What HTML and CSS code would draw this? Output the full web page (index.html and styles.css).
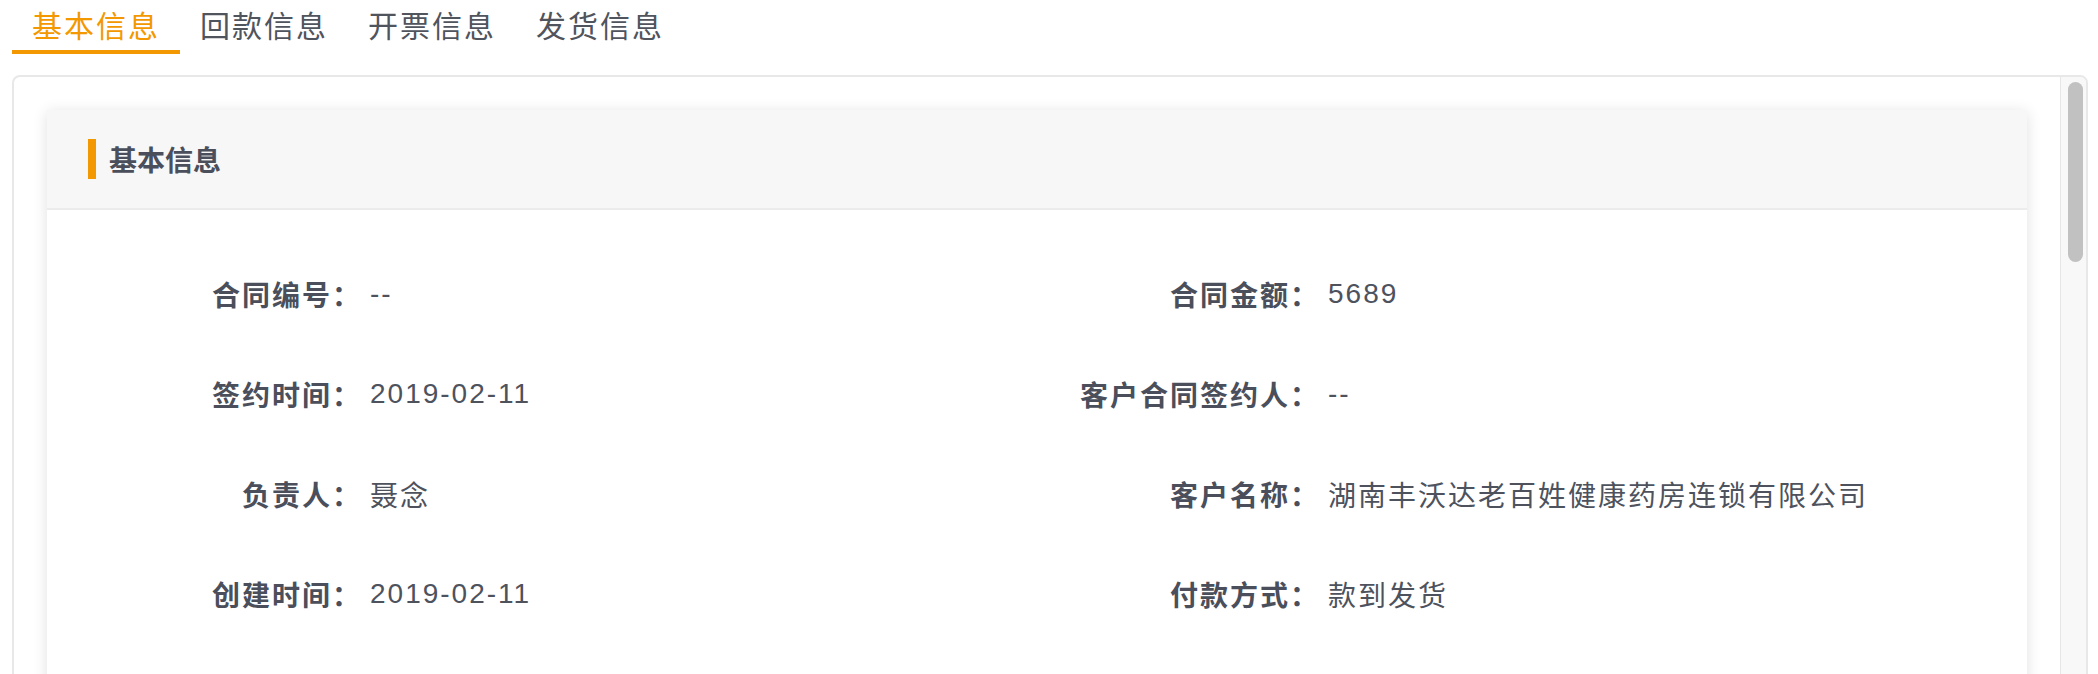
FILE: index.html
```html
<!DOCTYPE html>
<html lang="zh-CN">
<head>
<meta charset="utf-8">
<title>合同详情</title>
<link rel="stylesheet" href="styles.css">
</head>
<body>
<nav class="tabs">
  <div class="tab active">基本信息</div>
  <div class="tab">回款信息</div>
  <div class="tab">开票信息</div>
  <div class="tab">发货信息</div>
</nav>
<section class="panel">
  <div class="panel-main">
    <div class="card">
      <div class="card-header">
        <span class="card-mark"></span>
        <span class="card-title">基本信息</span>
      </div>
      <div class="card-body">
        <div class="field"><span class="field-label">合同编号：</span><span class="field-value">--</span></div>
        <div class="field"><span class="field-label">合同金额：</span><span class="field-value">5689</span></div>
        <div class="field"><span class="field-label">签约时间：</span><span class="field-value">2019-02-11</span></div>
        <div class="field"><span class="field-label">客户合同签约人：</span><span class="field-value">--</span></div>
        <div class="field"><span class="field-label">负责人：</span><span class="field-value">聂念</span></div>
        <div class="field"><span class="field-label">客户名称：</span><span class="field-value">湖南丰沃达老百姓健康药房连锁有限公司</span></div>
        <div class="field"><span class="field-label">创建时间：</span><span class="field-value">2019-02-11</span></div>
        <div class="field"><span class="field-label">付款方式：</span><span class="field-value">款到发货</span></div>
      </div>
    </div>
  </div>
  <div class="scrollbar"><div class="scrollbar-thumb"></div></div>
</section>
</body>
</html>
```
FILE: styles.css
```css
html, body {
  margin: 0;
  padding: 0;
  background: #ffffff;
}
body {
  height: 674px;
  overflow: hidden;
  padding: 0 10px 0 12px;
  font-family: "Liberation Sans", "Noto Sans CJK SC", sans-serif;
  color: #4a4f5b;
}
.tabs {
  display: flex;
  height: 54px;
}
.tab {
  padding: 0 20px;
  font-size: 30px;
  letter-spacing: 2px;
  line-height: 54px;
  height: 50px;
  color: #50545c;
  border-bottom: 4px solid transparent;
}
.tab.active {
  color: #f39800;
  border-bottom-color: #f39800;
}
.panel {
  margin-top: 21px;
  display: flex;
  height: 640px;
  border: 2px solid #e8e8e8;
  border-radius: 8px;
  overflow: hidden;
}
.panel-main {
  flex: 1;
  padding: 33px 33px 0 33px;
  overflow: hidden;
}
.card {
  background: #fff;
  box-shadow: 0 2px 14px rgba(0, 0, 0, 0.12);
  height: 800px;
}
.card-header {
  display: flex;
  align-items: center;
  height: 98px;
  padding-left: 41px;
  background: #f7f7f8;
  border-bottom: 2px solid #ececec;
}
.card-mark {
  width: 8px;
  height: 40px;
  background: #f39800;
}
.card-title {
  margin-left: 13px;
  font-size: 28px;
  font-weight: 700;
  color: #4a4f5b;
}
.card-body {
  display: grid;
  grid-template-columns: 958px 958px;
  grid-auto-rows: 100px;
  padding: 34px 32px 0 32px;
}
.field {
  display: flex;
  align-items: center;
  font-size: 28px;
  letter-spacing: 2px;
}
.field-label {
  width: 291px;
  box-sizing: border-box;
  padding-right: 8px;
  text-align: right;
  font-weight: 600;
  color: #4a4f5b;
}
.field-value {
  color: #4d525d;
}
.scrollbar {
  width: 15px;
  padding: 5px 3px 0 7px;
  background: #f8f8f8;
  border-left: 1px solid #e6e6e6;
}
.scrollbar-thumb {
  width: 15px;
  height: 180px;
  border-radius: 8px;
  background: #c1c1c1;
}
```
